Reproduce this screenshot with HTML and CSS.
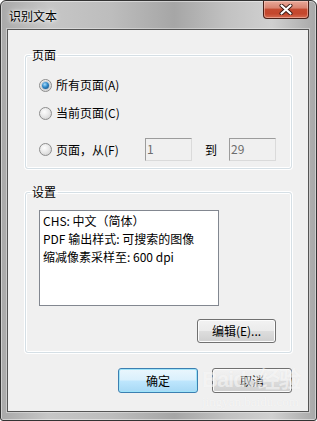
FILE: index.html
```html
<!DOCTYPE html>
<html lang="zh-CN">
<head>
	<meta charset="UTF-8">
	<title>识别文本</title>
	<link rel="stylesheet" href="styles.css">
</head>
<body>
	<div class="window">
		<div class="titlebar">
			<span class="title">识别文本</span>
			<div class="close">
				<svg width="14" height="11" viewBox="0 0 14 11">
					<path d="M2.5 1.5 L11.5 9.5 M11.5 1.5 L2.5 9.5" stroke="#3a1a14" stroke-width="4" stroke-linecap="round"/>
					<path d="M2.5 1.5 L11.5 9.5 M11.5 1.5 L2.5 9.5" stroke="#fff" stroke-width="2.2" stroke-linecap="round"/>
				</svg>
			</div>
		</div>

		<div class="client">
			<fieldset class="group">
				<legend>页面</legend>
				<div class="group-body pages">
					<label class="opt"><span class="radio checked"></span><span>所有页面(A)</span></label>
					<label class="opt second"><span class="radio"></span><span>当前页面(C)</span></label>
					<div class="opt range">
						<span class="radio"></span><span class="from">页面，从(F)</span>
						<span class="field">1</span>
						<span class="to">到</span>
						<span class="field">29</span>
					</div>
				</div>
			</fieldset>

			<fieldset class="group settings">
				<legend>设置</legend>
				<div class="group-body">
					<div class="listbox">
						<div>CHS: 中文（简体）</div>
						<div>PDF 输出样式: 可搜索的图像</div>
						<div>缩减像素采样至: 600 dpi</div>
					</div>
					<div class="edit-row">
						<button class="btn">编辑(E)...</button>
					</div>
				</div>
			</fieldset>

			<div class="buttons">
				<button class="btn default">确定</button>
				<button class="btn">取消</button>
			</div>
		</div>

		<div class="watermark">
			<div class="wm-logo">Bai<span class="wm-du">du</span>经验</div>
			<div class="wm-url">jingyan.baidu.com</div>
		</div>
	</div>
</body>
</html>
```

FILE: styles.css
```css
*{margin:0;padding:0;box-sizing:border-box;}
body{background:#fff;font-family:"Noto Sans CJK SC","Liberation Sans",sans-serif;font-size:12px;color:#000;}

.window{
	position:relative;
	width:317px;height:421px;
	border:1px solid #333;
	border-radius:6px 6px 3px 3px;
	padding:0 7px 8px 6px;
	background:linear-gradient(90deg,#a9a9a9 0%,#c6c6c6 15%,#bdbdbd 35%,#a6a6a6 55%,#c2c2c2 72%,#d0d0d0 86%,#a8a8a8 100%);
	box-shadow:inset 0 0 0 1px rgba(255,255,255,.45);
	display:flex;flex-direction:column;
	overflow:hidden;
}

.titlebar{height:28px;display:flex;align-items:flex-start;justify-content:space-between;}
.title{margin:7px 0 0 2px;line-height:16px;text-shadow:0 0 6px #fff,0 0 3px #fff;}
.close{
	width:46px;height:18px;
	border:1px solid #4a2018;border-top:none;
	border-radius:0 0 4px 4px;
	background:linear-gradient(#e9a999 0%,#d98471 40%,#c54a30 50%,#c4472d 75%,#d56c52 100%);
	box-shadow:inset 0 0 0 1px rgba(255,220,210,.45);
	display:flex;align-items:center;justify-content:center;
}

.client{
	height:383px;
	background:#f0f0f0;
	border:1px solid #555;
	box-shadow:0 0 0 1px rgba(255,255,255,.35);
	padding:17px 16px 0 17px;
}

.group{
	border:1px solid #d5dfe5;
	border-radius:3px;
	box-shadow:inset 0 0 0 1px #fff,0 0 0 1px #fff;
	min-width:0;
}
.group legend{margin-left:4px;padding:0 2px;line-height:16px;}
.group-body{padding:14px 15px 7px 13px;}

.opt{display:flex;align-items:center;height:16px;line-height:16px;}
.opt.second{margin-top:12px;}
.opt.range{margin-top:17px;height:23px;}
.radio{
	width:13px;height:13px;border-radius:50%;
	border:1px solid #8d8d8d;
	background:radial-gradient(circle at 40% 35%,#fdfdfd 0%,#e9e9e9 45%,#c9c9c9 100%);
	margin-right:4px;flex:none;
	display:flex;align-items:center;justify-content:center;
}
.radio.checked::after{
	content:"";width:7px;height:7px;border-radius:50%;
	background:radial-gradient(circle at 40% 35%,#a9dcfb 0%,#2f88c8 45%,#123f6c 100%);
	box-shadow:0 0 0 1px #c6ccd2;
}
.from{width:89px;}
.field{
	width:47px;height:23px;
	border:1px solid;border-color:#9c9c9c #dadada #dadada #9c9c9c;
	background:#f0f0f0;color:#6d6d6d;
	padding-left:1px;line-height:20px;
}
.to{margin:0 12px 0 13px;}

.settings{margin-top:15px;}
.settings .group-body{padding:10px 15px 9px 13px;}
.listbox{
	width:180px;height:96px;
	background:#fff;border:1px solid #828790;
	padding:1px 3px;line-height:18px;
}
.edit-row{display:flex;justify-content:flex-end;margin-top:13px;}

.btn{
	width:79px;height:24px;
	font:inherit;color:#000;
	border:1px solid #707070;border-radius:3px;
	background:linear-gradient(#f2f2f2 0%,#ebebeb 48%,#dddddd 52%,#cfcfcf 100%);
	box-shadow:inset 0 0 0 1px #fcfcfc;
	line-height:20px;
}
.buttons{display:flex;justify-content:flex-end;gap:14px;margin-top:15px;}
.buttons .btn{width:80px;height:25px;}
.btn.default{
	border-color:#3c7fb1;
	background:linear-gradient(#eaf6fd 0%,#d9f0fc 48%,#bee6fd 52%,#a7d9f5 100%);
	box-shadow:inset 0 0 0 1px #9fe4f9;
}

.watermark{position:absolute;left:201px;top:366px;color:rgba(255,255,255,.6);pointer-events:none;}
.wm-logo{font-family:"Liberation Sans",sans-serif;font-size:22px;font-weight:bold;line-height:26px;letter-spacing:-1px;text-shadow:0 0 1px rgba(0,0,0,.06);}
.wm-url{font-family:"Liberation Serif",serif;font-size:13px;line-height:14px;margin-top:2px;text-shadow:0 0 1px rgba(0,0,0,.06);}
```
